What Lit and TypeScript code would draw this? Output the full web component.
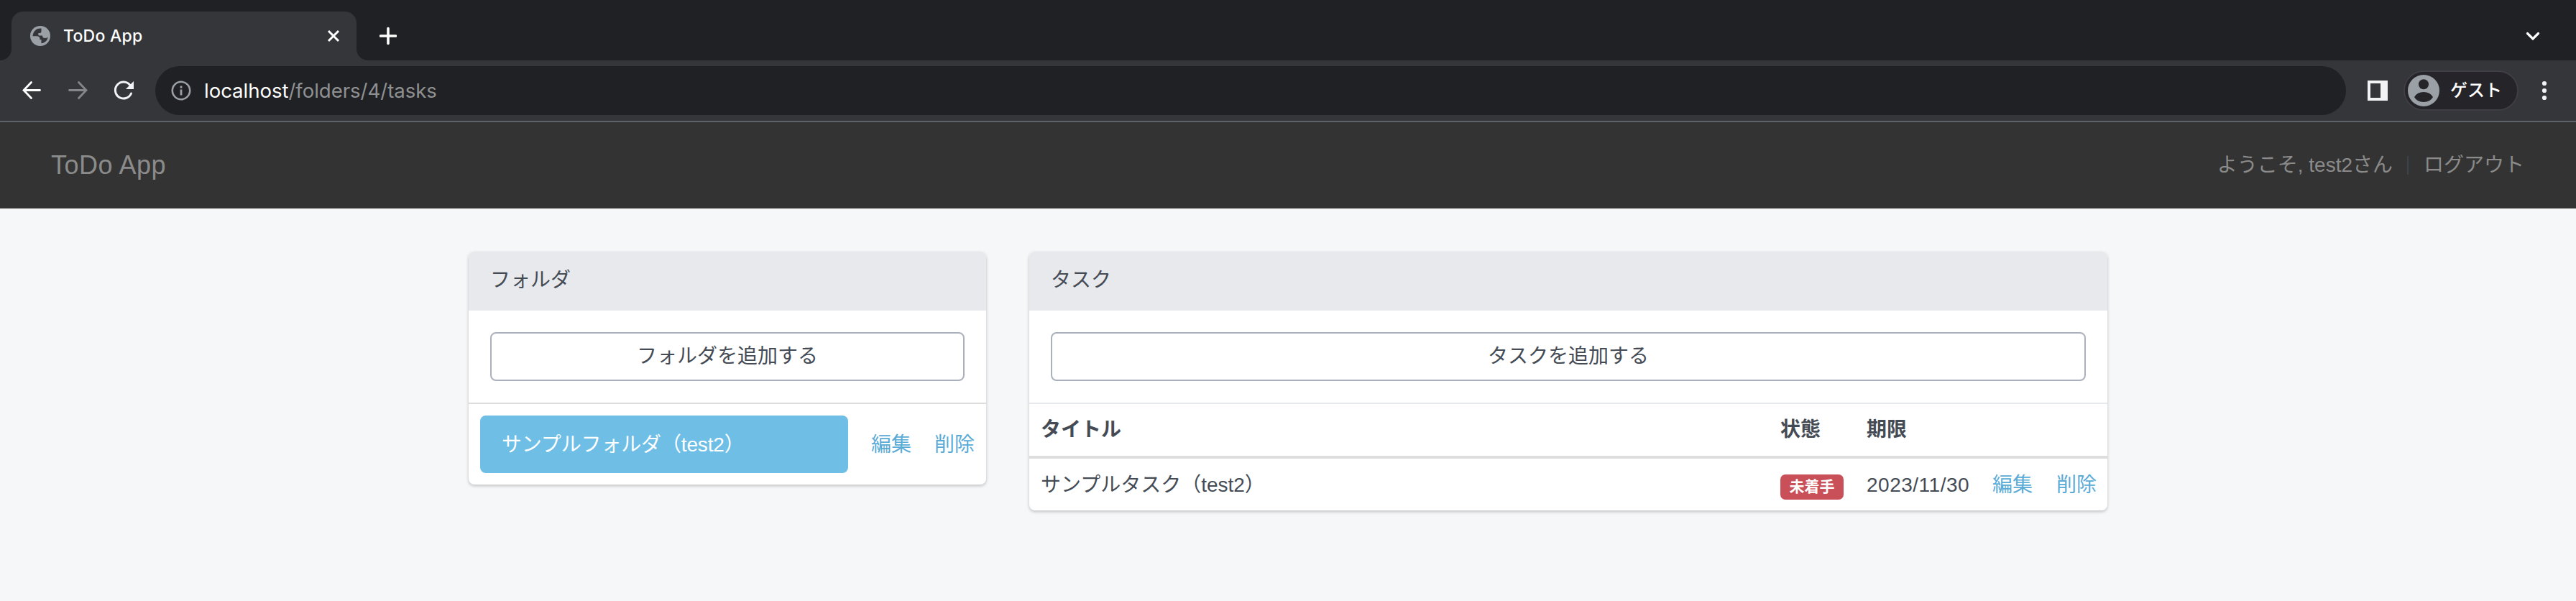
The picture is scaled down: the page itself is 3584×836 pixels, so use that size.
import { LitElement, html, css, svg } from "lit";
import { customElement } from "lit/decorators.js";

@customElement("browser-chrome")
class BrowserChrome extends LitElement {
  static styles = css`
    :host { display: block; color: #fff; font-family: "Inter", "Noto Sans CJK JP", sans-serif; }
    svg { display: block; flex: none; }
    .strip { display: flex; align-items: flex-end; height: 84px; background: #202124; }
    .curve { display: block; width: 16px; height: 68px; }
    .tab { box-sizing: border-box; display: flex; align-items: center; width: 480px; height: 68px; padding: 0 22px 0 26px; background: #35363a; border-radius: 16px 16px 0 0; }
    .title { flex: 1; margin-left: 18px; font-size: 23px; line-height: 30px; font-weight: 450; letter-spacing: 0.25px; }
    .new { margin: 0 0 20px 16px; }
    .down { margin: 0 49px 26px auto; }
    .bar { box-sizing: border-box; display: flex; align-items: center; height: 86px; padding: 0 40px 0 28px; background: #35363a; border-bottom: 2px solid #5f6368; }
    .nav { display: flex; gap: 32px; }
    .url { box-sizing: border-box; display: flex; align-items: center; flex: 1; height: 68px; margin-left: 28px; padding-left: 21px; border-radius: 34px; background: #202124; font-size: 27.6px; line-height: 36px; letter-spacing: -0.05px; }
    .address { margin-left: 17px; white-space: nowrap; }
    .path { color: #8f9092; }
    .panel { margin: 0 22px 0 30px; }
    .guest { box-sizing: border-box; display: flex; align-items: center; width: 160px; height: 56px; padding-left: 4px; border: 2px solid #3f3e44; border-radius: 28px; background: #252429; font-size: 24px; line-height: 30px; }
    .guest span { margin-left: 15px; font-weight: 500; }
    .dots { margin-left: 32px; }
  `;

  render() {
    return html`
      <div class="strip">
        <svg class="curve" viewBox="0 0 16 68"><path d="M16 52a16 16 0 0 1-16 16h16z" fill="#35363a" /></svg>
        <div class="tab">
          <svg width="28" height="28" viewBox="0 0 28 28">
            <circle cx="14" cy="14" r="14" fill="#9aa0a6" />
            <path d="M15.500 3.500C8 3 4 8 3.500 14.300H9q4.500 0 4.500 4v1h2v5C20 24 24.500 20 24.500 15.500q-1 1.500-4 1.500-3.500 0-3.500-3.500h-4.500q-2-1-1-3.500h2q2 0 2-2.500z" fill="#35363a" />
          </svg>
          <span class="title">ToDo App</span>
          <svg width="20" height="20" viewBox="0 0 20 20"><path d="M3 3l14 14M17 3L3 17" stroke="#fff" stroke-width="3" /></svg>
        </div>
        <svg class="curve" viewBox="0 0 16 68"><path d="M0 52a16 16 0 0 0 16 16H0z" fill="#35363a" /></svg>
        <svg class="new" width="24" height="28" viewBox="0 0 24 28"><path d="M12 3.500v21M1.500 14h21" stroke="#fff" stroke-width="3.600" stroke-linecap="round" /></svg>
        <svg class="down" width="22" height="16" viewBox="0 0 22 16"><path d="M3.500 4.500l7.500 7.500 7.500-7.500" fill="none" stroke="#fff" stroke-width="3.200" stroke-linecap="round" /></svg>
      </div>
      <div class="bar">
        <div class="nav">
          <svg width="32" height="32" viewBox="0 0 32 32"><path d="M15.500 4.500L5 15.500l10.500 11M5.500 15.500h22" fill="none" stroke="#fff" stroke-width="2.800" stroke-linecap="round" /></svg>
          <svg width="32" height="32" viewBox="0 0 32 32"><path d="M17.500 4.500L28 15.500l-10.500 11M27.500 15.500h-23" fill="none" stroke="#85868a" stroke-width="2.800" stroke-linecap="round" /></svg>
          <svg width="32" height="32" viewBox="0 0 32 32"><path d="M25 8.500A11.500 11.500 0 1 0 26.500 20" fill="none" stroke="#f1f3f4" stroke-width="3" stroke-linecap="round" /><path d="M30 3v11H19z" fill="#f1f3f4" /></svg>
        </div>
        <div class="url">
          <svg width="30" height="30" viewBox="0 0 30 30"><circle cx="15" cy="15" r="12.200" fill="none" stroke="#9aa0a6" stroke-width="2.600" /><path d="M15 8.500v3M15 13.500v8" stroke="#9aa0a6" stroke-width="2.800" /></svg>
          <span class="address">localhost<span class="path">/folders/4/tasks</span></span>
        </div>
        <svg class="panel" width="28" height="28" viewBox="0 0 28 28"><path d="M0 0h28v28H0zM4 4v20h14V4z" fill="#f1f3f4" fill-rule="evenodd" /></svg>
        <div class="guest">
          <svg width="44" height="44" viewBox="0 0 44 44">
            <circle cx="22" cy="22" r="22" fill="#9aa0a6" />
            <circle cx="22" cy="13.300" r="7" fill="#252429" />
            <path d="M9 31q4-7 13-7t13 7q-4 7-13 7t-13-7z" fill="#252429" />
          </svg>
          <span>ゲスト</span>
        </div>
        <svg class="dots" width="8" height="28" viewBox="0 0 8 28">
          ${[4, 14, 24].map((y) => svg`<circle cx="4" cy=${y} r="3.100" fill="#f1f3f4" />`)}
        </svg>
      </div>
    `;
  }
}

@customElement("app-root")
class AppRoot extends LitElement {
  static styles = css`
    :host { display: block; min-height: 836px; background: #f5f7f9; color: #444b55; font: 28px/40px "Liberation Sans", "Noto Sans CJK JP", sans-serif; }
    .navbar { box-sizing: border-box; display: flex; align-items: center; height: 120px; padding: 0 72px; background: #333; color: #8b8b8b; }
    .brand { margin-left: -1px; font-size: 36px; letter-spacing: 0.5px; }
    .user { display: flex; align-items: center; margin-left: auto; }
    .divider { width: 2px; height: 26px; margin: 0 21px 0 20px; background: #3d434b; }
    .main { display: flex; align-items: flex-start; gap: 60px; padding: 60px 652px 0; }
    .card { background: #fff; border-radius: 8px; box-shadow: 0 2px 4px rgba(0, 0, 0, 0.22); overflow: hidden; }
    .folders { width: 720px; }
    .tasks { width: 1500px; }
    .heading { box-sizing: border-box; height: 82px; padding: 20px 30px 0; background: #e7e9ec; }
    .body { padding: 30px; }
    .button { box-sizing: border-box; height: 68px; padding-top: 12px; border: 2px solid #aab1bd; border-radius: 8px; text-align: center; }
    .list { display: flex; align-items: center; padding: 16px; border-top: 2px solid #ddd; height: 80px; gap: 32px; }
    .active { box-sizing: border-box; width: 512px; height: 80px; padding: 21px 30px 0; border-radius: 8px; background: #6ebee6; color: #fff; white-space: nowrap; letter-spacing: -0.15px; }
    .link { color: #5aabd6; padding-top: 2px; }
    .row { display: grid; grid-template-columns: 1fr 120px 175px 89px 87px; align-items: center; height: 72px; }
    .row > * { padding-left: 16px; white-space: nowrap; }
    .head { border-top: 2px solid #e7e9ec; border-bottom: 4px solid #ddd; font-weight: 700; }
    .name, .date { padding-top: 2px; }
    .date { letter-spacing: 0.5px; }
    .badge { box-sizing: border-box; width: 88px; height: 35px; margin-top: 7px; border-radius: 7px; background: #c94f58; color: #fff; font-size: 21px; line-height: 34px; font-weight: 700; text-align: center; }
  `;

  render() {
    return html`
      <browser-chrome></browser-chrome>
      <nav class="navbar">
        <span class="brand">ToDo App</span>
        <div class="user">
          <span>ようこそ, test2さん</span>
          <span class="divider"></span>
          <span>ログアウト</span>
        </div>
      </nav>
      <main class="main">
        <section class="card folders">
          <div class="heading">フォルダ</div>
          <div class="body"><div class="button">フォルダを追加する</div></div>
          <div class="list">
            <div class="active">サンプルフォルダ（test2）</div>
            <span class="link">編集</span>
            <span class="link">削除</span>
          </div>
        </section>
        <section class="card tasks">
          <div class="heading">タスク</div>
          <div class="body"><div class="button">タスクを追加する</div></div>
          <div class="row head"><span>タイトル</span><span>状態</span><span>期限</span><span></span><span></span></div>
          <div class="row">
            <span class="name">サンプルタスク（test2）</span>
            <span><div class="badge">未着手</div></span>
            <span class="date">2023/11/30</span>
            <span class="link">編集</span>
            <span class="link">削除</span>
          </div>
        </section>
      </main>
    `;
  }
}
